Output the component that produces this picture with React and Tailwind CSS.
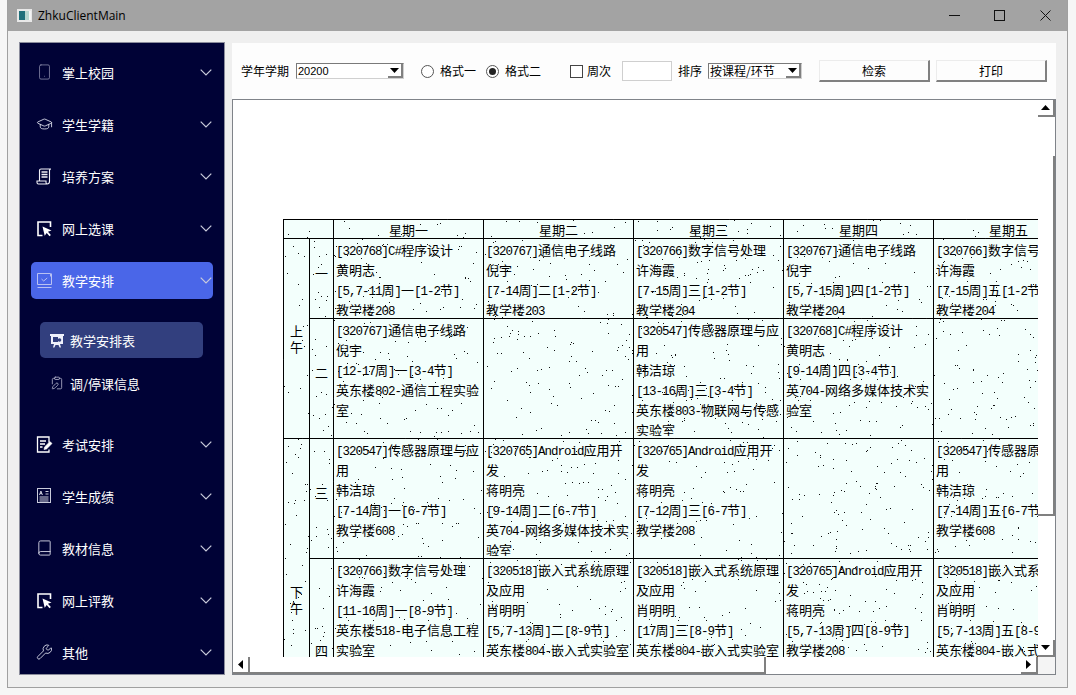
import { useMemo } from 'react'
import { Book, ClipboardPen, GraduationCap, Smartphone, Wrench } from 'lucide-react'

const CJK = '"Noto Sans CJK SC", sans-serif'

function PickIcon() {
  return (
    <svg width="17" height="17" viewBox="0 0 17 17" fill="none">
      <path d="M6.5 15.5H2V2h12.5v5" stroke="#fff" strokeWidth="1.6" />
      <path d="M6.5 6.5l9 4-3.6 1.2 3 3.4-1.4 1.2-2.8-3.4-2 2.8z" fill="#fff" />
    </svg>
  )
}

function ScreenIcon() {
  return (
    <svg width="17" height="17" viewBox="0 0 17 17" fill="none" stroke="#b9c1f2" strokeWidth="1">
      <path d="M1.5 12.5V1.5h13v3M15.5 1.5v11h-14M1.5 15.5h14" />
      <path d="M5.5 7l2.2 2 3.5-3" />
    </svg>
  )
}

function DiplomaIcon() {
  return (
    <svg width="17" height="17" viewBox="0 0 17 17" fill="none" stroke="#f0f0f6" strokeWidth="1.1">
      <path d="M3.5 13V2.5A1.5 1.5 0 0 1 5 1h10a1.5 1.5 0 0 0-1.5 1.5v11A2.5 2.5 0 0 1 11 16H2.5A1.5 1.5 0 0 1 1 14.5V13h9v1.5a1.5 1.5 0 0 0 1 1.5" />
      <path d="M5.5 4h6M5.5 6.5h6M5.5 9h6" strokeWidth="1.4" />
    </svg>
  )
}

function ExamIcon() {
  return (
    <svg width="17" height="17" viewBox="0 0 17 17" fill="none" stroke="#fff">
      <path d="M13 6.5V1H1.5v15H13v-2.5" strokeWidth="1.3" />
      <path d="M4 5h6M4 8h5M4 11h2.5" strokeWidth="1.3" />
      <path d="M8 13.5l.6-2.6L14 5.5l2 2-5.4 5.4z" fill="#fff" strokeWidth=".6" />
    </svg>
  )
}

function GradeIcon() {
  return (
    <svg width="15" height="16" viewBox="0 0 15 16" fill="none" stroke="#c9cbdb" strokeWidth="1">
      <rect x=".5" y=".5" width="13" height="14" />
      <path d="M2.5 7l1.4-4L5.4 7M3 5.6h2M8.5 3.5h3M8.5 6h3M2.5 9h9M2.5 11h9M2.5 13h9" />
    </svg>
  )
}

function BoardIcon() {
  return (
    <svg width="14" height="15" viewBox="0 0 14 15">
      <path d="M0 1h14v2h-1v8H1V3H0z" fill="#eef0fb" />
      <rect x="3" y="4" width="5" height="5" fill="#323f7e" />
      <circle cx="9.5" cy="7" r="1.8" fill="#323f7e" />
      <path d="M4 11l-1 3.5h1.4L5.5 12h3l1.1 2.5H11L10 11z" fill="#eef0fb" />
    </svg>
  )
}

function Chevron() {
  return (
    <svg className="mr-px ml-auto shrink-0" width="12" height="7" viewBox="0 0 12 7" fill="none" stroke="#c9cbdb" strokeWidth="1.2">
      <path d="M.7.6L6 6l5.3-5.4" />
    </svg>
  )
}

const iconStyle = { strokeWidth: 1.3, size: 18, color: '#d5d7e6' }

const menuTop = [
  { label: '掌上校园', icon: <Smartphone strokeWidth={1} size={18} color="#9a9cb8" /> },
  { label: '学生学籍', icon: <GraduationCap {...iconStyle} /> },
  { label: '培养方案', icon: <DiplomaIcon /> },
  { label: '网上选课', icon: <PickIcon /> },
]

const menuBottom = [
  { label: '考试安排', icon: <ExamIcon /> },
  { label: '学生成绩', icon: <GradeIcon /> },
  { label: '教材信息', icon: <Book {...iconStyle} /> },
  { label: '网上评教', icon: <PickIcon /> },
  { label: '其他', icon: <Wrench {...iconStyle} /> },
]

function MenuItem({ label, icon }) {
  return (
    <div className="mx-[11px] flex h-[52px] shrink-0 items-center pl-[5px] text-[13px] text-white">
      <span className="flex w-[17px] shrink-0 justify-center">{icon}</span>
      <span className="mt-[2px] ml-[9px]">{label}</span>
      <Chevron />
    </div>
  )
}

function Sidebar() {
  return (
    <aside className="flex h-[633px] w-[206px] shrink-0 flex-col overflow-hidden border border-[#8b8d9c] bg-[#000236] pt-[3px]">
      {menuTop.map((m) => (
        <MenuItem key={m.label} {...m} />
      ))}
      {/* expanded group */}
      <div className="mx-[11px] mt-2 mb-[6px] flex h-[37px] shrink-0 items-center rounded-[5px] bg-[#4a66e8] pl-[5px] text-[13px] text-white">
        <span className="flex w-[17px] shrink-0 justify-center">
          <ScreenIcon />
        </span>
        <span className="ml-[9px]">教学安排</span>
        <Chevron />
      </div>
      <div className="h-[113px] shrink-0 pt-[17px] pl-5 text-[13px] text-white">
        <div className="flex h-9 w-[163px] items-center rounded-[5px] bg-[#323f7e] pl-[10px]">
          <BoardIcon />
          <span className="mt-[2px] ml-[6px]">教学安排表</span>
        </div>
        <div className="mt-[3px] flex h-11 items-center pl-[10px]">
          <ClipboardPen strokeWidth={1.4} size={14} color="#b4b6cc" />
          <span className="mt-[2px] ml-[6px]">调/停课信息</span>
        </div>
      </div>
      {menuBottom.map((m) => (
        <MenuItem key={m.label} {...m} />
      ))}
    </aside>
  )
}

function Arrow({ dir = 'down' }) {
  const points = {
    down: '0,0 9,0 4.5,5',
    up: '0,5 9,5 4.5,0',
    left: '5,0 5,9 0,4.5',
    right: '0,0 0,9 5,4.5',
  }[dir]
  const vertical = dir === 'up' || dir === 'down'
  return (
    <svg width={vertical ? 9 : 5} height={vertical ? 5 : 9}>
      <polygon points={points} fill="#000" />
    </svg>
  )
}

function Select({ value, className, textClass }) {
  return (
    <div className={`flex h-4 items-center border border-t-[#7a7a7a] border-l-[#7a7a7a] border-r-[#d0d0d0] border-b-[#d0d0d0] bg-white ${className}`}>
      <span className={`flex-1 overflow-hidden pl-px whitespace-nowrap ${textClass}`}>{value}</span>
      <span className="flex h-full w-[15px] items-center justify-center border-r-2 border-b-2 border-[#808080]">
        <Arrow />
      </span>
    </div>
  )
}

function Radio({ checked, className }) {
  return (
    <span className={`flex h-[13px] w-[13px] items-center justify-center rounded-full border border-[#555] bg-white ${className}`}>
      {checked && <span className="h-[7px] w-[7px] rounded-full bg-[#222]" />}
    </span>
  )
}

function Btn({ label, className }) {
  return (
    <div className={`flex h-[22px] w-[111px] items-center justify-center border-t border-l border-[#ececec] border-r-2 border-b-2 border-r-[#808080] border-b-[#808080] bg-[#fdfdfd] text-xs ${className}`}>
      {label}
    </div>
  )
}

function Toolbar() {
  return (
    <div className="flex h-[56px] shrink-0 items-center bg-[#fdfdfd] pl-[9px] text-xs text-black">
      <span className="w-12 shrink-0">学年学期</span>
      <Select value="20200" className="ml-[7px] w-[108px]" textClass="font-['Liberation_Sans'] text-[11px]" />
      <Radio className="ml-[17px] shrink-0" />
      <span className="ml-[6px] w-9 shrink-0">格式一</span>
      <Radio checked className="ml-[10px] shrink-0" />
      <span className="ml-[6px] w-9 shrink-0">格式二</span>
      <span className="ml-[29px] h-[13px] w-[13px] shrink-0 border border-[#444] bg-white" />
      <span className="ml-1 w-6 shrink-0">周次</span>
      <span className="ml-[11px] h-5 w-[50px] shrink-0 border border-[#cfcfcf] bg-white" />
      <span className="ml-[6px] w-6 shrink-0">排序</span>
      <Select value="按课程/环节" className="ml-[6px] w-[94px]" textClass="text-xs" />
      <Btn label="检索" className="ml-[17px] shrink-0" />
      <Btn label="打印" className="ml-[6px] shrink-0" />
    </div>
  )
}

const headers = ['星期一', '星期二', '星期三', '星期四', '星期五']

const rows = [
  {
    no: '一',
    h: 'h-[80px]',
    inner: 'h-[77px]',
    cells: [
      ['[320768]C#程序设计', '黄明志', '[5,7-11周]一[1-2节]', '教学楼208'],
      ['[320767]通信电子线路', '倪宇', '[7-14周]二[1-2节]', '教学楼203'],
      ['[320766]数字信号处理', '许海霞', '[7-15周]三[1-2节]', '教学楼204'],
      ['[320767]通信电子线路', '倪宇', '[5,7-15周]四[1-2节]', '教学楼204'],
      ['[320766]数字信号处理', '许海霞', '[7-15周]五[1-2节]', '教学楼204'],
    ],
  },
  {
    no: '二',
    h: 'h-[120px]',
    inner: 'h-[117px]',
    cells: [
      ['[320767]通信电子线路', '倪宇', '[12-17周]一[3-4节]', '英东楼802-通信工程实验', '室'],
      [],
      ['[320547]传感器原理与应', '用', '韩洁琼', '[13-16周]三[3-4节]', '英东楼803-物联网与传感', '实验室'],
      ['[320768]C#程序设计', '黄明志', '[9-14周]四[3-4节]', '英704-网络多媒体技术实', '验室'],
      [],
    ],
  },
  {
    no: '三',
    h: 'h-[120px]',
    inner: 'h-[117px]',
    cells: [
      ['[320547]传感器原理与应', '用', '韩洁琼', '[7-14周]一[6-7节]', '教学楼608'],
      ['[320765]Android应用开', '发', '蒋明亮', '[9-14周]二[6-7节]', '英704-网络多媒体技术实', '验室'],
      ['[320765]Android应用开', '发', '蒋明亮', '[7-12周]三[6-7节]', '教学楼208'],
      [],
      ['[320547]传感器原理与应', '用', '韩洁琼', '[7-14周]五[6-7节]', '教学楼608'],
    ],
  },
  {
    no: '四',
    h: 'h-[196px]',
    inner: 'h-[193px]',
    cells: [
      ['[320766]数字信号处理', '许海霞', '[11-16周]一[8-9节]', '英东楼518-电子信息工程', '实验室'],
      ['[320518]嵌入式系统原理', '及应用', '肖明明', '[5,7-13周]二[8-9节]', '英东楼804-嵌入式实验室'],
      ['[320518]嵌入式系统原理', '及应用', '肖明明', '[17周]三[8-9节]', '英东楼804-嵌入式实验室'],
      ['[320765]Android应用开', '发', '蒋明亮', '[5,7-13周]四[8-9节]', '教学楼208'],
      ['[320518]嵌入式系统原理', '及应用', '肖明明', '[5,7-13周]五[8-9节]', '英东楼804-嵌入式实验室'],
    ],
  },
]

// half-width runs need the 6.5px advance of the original font
function Line({ text }) {
  const parts = text.split(/([\x00-\x7f]+)/).filter(Boolean)
  return (
    <div className="h-5 leading-5 whitespace-nowrap">
      {parts.map((p, i) =>
        /^[\x00-\x7f]/.test(p) ? (
          <span key={i} className="font-['Liberation_Mono'] text-[12.5px] tracking-[-1px]">{p}</span>
        ) : (
          <span key={i}>{p}</span>
        ),
      )}
    </div>
  )
}

// speckled print noise over the schedule image
function Speckle() {
  const dots = useMemo(() => {
    let seed = 20200
    const rnd = () => {
      seed = (seed * 1664525 + 1013904223) % 4294967296
      return seed / 4294967296
    }
    return Array.from({ length: 1700 }, () => [Math.floor(rnd() * 755), Math.floor(rnd() * 438)])
  }, [])
  return (
    <svg className="pointer-events-none absolute top-0 left-0" width="755" height="438" shapeRendering="crispEdges">
      {dots.map(([x, y], i) => (
        <rect key={i} x={x} y={y} width="1" height="1" fill="#111" />
      ))}
    </svg>
  )
}

function Schedule() {
  const border = 'border border-black'
  return (
    <div className="relative w-[801px] shrink-0">
      <table className="w-[801px] table-fixed border-collapse bg-[#f3fffc] text-[13px] leading-[17px] text-black">
        <colgroup>
          <col className="w-[26px]" />
          <col className="w-[24px]" />
          <col className="w-[150px]" />
          <col className="w-[150px]" />
          <col className="w-[150px]" />
          <col className="w-[150px]" />
          <col className="w-[150px]" />
        </colgroup>
        <tbody>
          <tr className="h-[19px]">
            <td className={border} colSpan={2} />
            {headers.map((h) => (
              <td key={h} className={`${border} p-0 text-center`}>{h}</td>
            ))}
          </tr>
          {rows.map((row, r) => (
            <tr key={row.no} className={row.h}>
              {r === 0 && (
                <td rowSpan={2} className={`${border} p-0 text-center leading-4`}>上<br />午</td>
              )}
              {r === 2 && (
                <td rowSpan={2} className={`${border} p-0 pt-[6px] text-center leading-4`}>下<br />午</td>
              )}
              <td className={`${border} p-0 pb-3 text-center`}>{row.no}</td>
              {row.cells.map((lines, c) => (
                <td key={c} className={`${border} p-0 pl-[2px] align-top`}>
                  <div className={`overflow-hidden pt-px ${row.inner}`}>
                    {lines.map((l, i) => (
                      <Line key={i} text={l} />
                    ))}
                  </div>
                </td>
              ))}
            </tr>
          ))}
        </tbody>
      </table>
      <Speckle />
    </div>
  )
}

function ScrollBtn({ dir, className = '' }) {
  return (
    <div className={`flex h-[17px] w-[17px] shrink-0 items-center justify-center border-r-2 border-b-2 border-[#808080] bg-white ${className}`}>
      <Arrow dir={dir} />
    </div>
  )
}

function ScheduleFrame() {
  return (
    <div className="flex h-[576px] flex-col border border-[#7f8389] bg-white">
      <div className="flex h-[557px] shrink-0">
        <div className="h-full w-[805px] shrink-0 overflow-hidden pt-[119px] pl-[50px]">
          <Schedule />
        </div>
        <div className="flex w-[17px] shrink-0 flex-col bg-white">
          <ScrollBtn dir="up" />
          <div className="h-[39px] shrink-0" />
          <div className="h-[360px] shrink-0 border-r-2 border-b-2 border-[#808080]" />
          <div className="flex-1" />
          <ScrollBtn dir="down" />
        </div>
      </div>
      <div className="flex h-[17px] shrink-0">
        <ScrollBtn dir="left" />
        <div className="w-[516px] shrink-0 border-r-2 border-b-2 border-[#808080]" />
        <div className="flex-1" />
        <ScrollBtn dir="right" />
        <div className="w-[17px] shrink-0 bg-[#f4f4f4]" />
      </div>
    </div>
  )
}

function TitleBar() {
  return (
    <div className="flex h-[31px] shrink-0 items-center bg-[#a3a3a3] pl-[9px] text-black">
      <svg width="15" height="13" viewBox="0 0 15 13">
        <rect width="15" height="13" fill="#e8e8e8" />
        <rect x="2" y="2" width="6" height="9" fill="#1f6f7a" />
        <rect x="8" y="2" width="4" height="9" fill="#b7d6d0" />
        <rect x="12" y="2" width="2" height="9" fill="#f5f5f5" />
      </svg>
      <span className="ml-[6px] font-['Open_Sans'] text-xs">ZhkuClientMain</span>
      <div className="ml-auto flex items-center pr-[16px]">
        <svg width="11" height="11" fill="none" stroke="#111">
          <path d="M0 5.5h11" />
        </svg>
        <svg className="ml-[34px]" width="11" height="11" fill="none" stroke="#111">
          <rect x=".5" y=".5" width="10" height="10" />
        </svg>
        <svg className="ml-[35px]" width="11" height="11" fill="none" stroke="#111">
          <path d="M.5.5l10 10M10.5.5l-10 10" />
        </svg>
      </div>
    </div>
  )
}

export default function App() {
  return (
    <div className="h-[695px] w-[1076px] overflow-hidden bg-[#f6f6f6]" style={{ fontFamily: CJK }}>
      <div className="ml-[7px] flex h-[688px] w-[1061px] flex-col border-x border-b border-[#a0a0a0] bg-[#efefef]">
        <TitleBar />
        <div className="flex gap-[7px] pt-[11px] pl-[11px]">
          <Sidebar />
          <main className="flex w-[824px] shrink-0 flex-col pt-px">
            <Toolbar />
            <ScheduleFrame />
          </main>
        </div>
      </div>
    </div>
  )
}
